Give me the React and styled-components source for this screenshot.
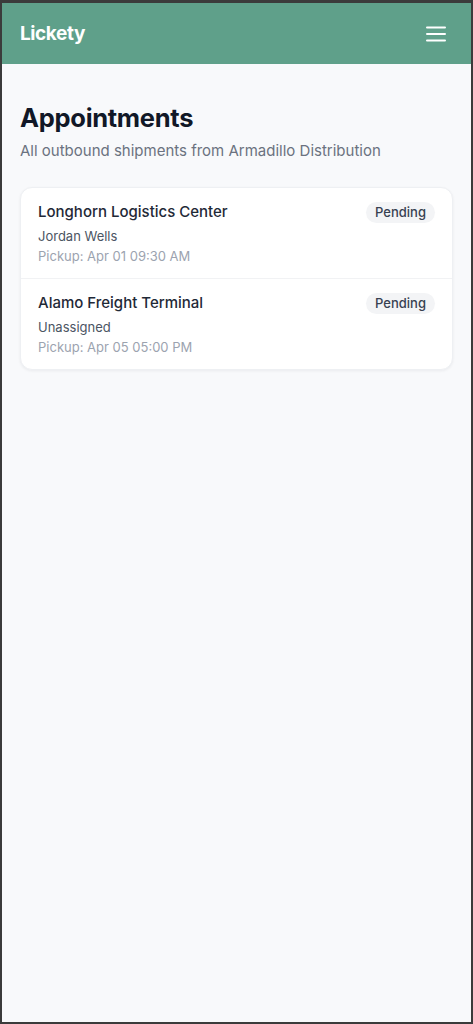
import styled, { createGlobalStyle } from "styled-components";

const GlobalStyle = createGlobalStyle`
  html, body {
    margin: 0;
    padding: 0;
    background: #3b3b3b;
    font-family: Inter, "Noto Sans", "Liberation Sans", sans-serif;
  }
  * { box-sizing: border-box; }
`;

const appointments = [
  {
    place: "Longhorn Logistics Center",
    driver: "Jordan Wells",
    pickup: "Apr 01 09:30 AM",
    status: "Pending",
  },
  {
    place: "Alamo Freight Terminal",
    driver: "Unassigned",
    pickup: "Apr 05 05:00 PM",
    status: "Pending",
  },
];

const App = () => {
  return (
    <>
      <GlobalStyle />
      <Frame>
        <Header>
          <Logo>Lickety</Logo>
          <MenuButton aria-label="menu">
            <svg width="20" height="16" viewBox="0 0 20 16" fill="none">
              <path d="M1 1.5h18M1 8h18M1 14.5h18" stroke="#fff" strokeWidth="2" strokeLinecap="round" />
            </svg>
          </MenuButton>
        </Header>
        <Main>
          <Title>Appointments</Title>
          <Subtitle>All outbound shipments from Armadillo Distribution</Subtitle>
          <Card>
            {appointments.map(({ place, driver, pickup, status }) => (
              <Row key={place}>
                <Info>
                  <Place>{place}</Place>
                  <Driver>{driver}</Driver>
                  <Pickup>Pickup: {pickup}</Pickup>
                </Info>
                <Badge>{status}</Badge>
              </Row>
            ))}
          </Card>
        </Main>
      </Frame>
    </>
  );
};

export default App;

const Frame = styled.div`
  margin: 3px 2px 2px 2px;
  height: calc(100vh - 5px);
  background: #f8f9fb;
  display: flex;
  flex-direction: column;
`;

const Header = styled.header`
  height: 61px;
  background: #5fa08a;
  display: flex;
  align-items: center;
  justify-content: space-between;
  padding: 0 25px 0 18px;
`;

const Logo = styled.div`
  color: #fff;
  font-size: 19px;
  font-weight: 700;
  letter-spacing: -0.4px;
`;

const MenuButton = styled.button`
  border: none;
  background: transparent;
  padding: 0;
  display: flex;
  cursor: pointer;
`;

const Main = styled.main`
  padding: 38px 18px 0 18px;
`;

const Title = styled.h1`
  margin: 0;
  font-size: 25.5px;
  font-weight: 700;
  color: #111827;
  letter-spacing: -0.3px;
  line-height: 32px;
`;

const Subtitle = styled.p`
  margin: 7px 0 0 0;
  font-size: 15px;
  color: #6b7280;
  line-height: 20px;
`;

const Card = styled.div`
  margin-top: 26px;
  background: #fff;
  border: 1px solid #eef0f3;
  border-radius: 12px;
  box-shadow: 0 1px 3px rgba(17, 24, 39, 0.06);
`;

const Row = styled.div`
  display: flex;
  justify-content: space-between;
  align-items: flex-start;
  padding: 14px 17px 12px 17px;

  & + & {
    border-top: 1px solid #f1f2f4;
  }
`;

const Info = styled.div`
  display: flex;
  flex-direction: column;
`;

const Place = styled.div`
  font-size: 15px;
  font-weight: 500;
  color: #1f2937;
  line-height: 20px;
`;

const Driver = styled.div`
  margin-top: 4px;
  font-size: 13px;
  color: #4b5563;
  line-height: 20px;
`;

const Pickup = styled.div`
  font-size: 13px;
  color: #9ca3af;
  line-height: 20px;
`;

const Badge = styled.span`
  background: #f3f4f6;
  color: #374151;
  font-size: 13px;
  font-weight: 500;
  line-height: 21px;
  padding: 0 9px;
  border-radius: 999px;
`;
